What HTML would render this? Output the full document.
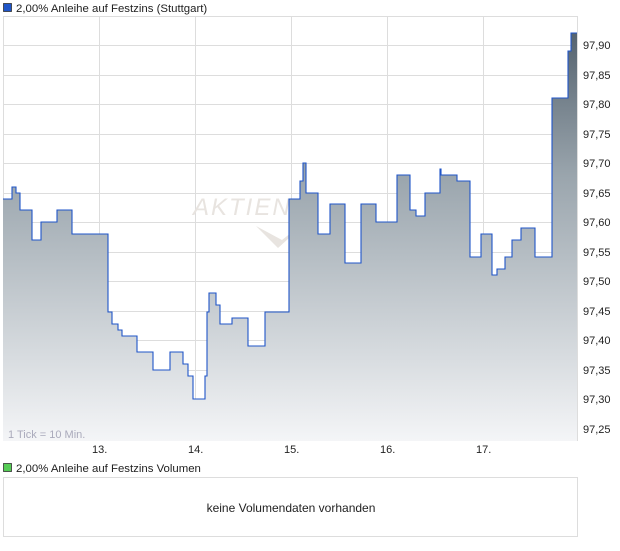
<!DOCTYPE html>
<html><head><meta charset="utf-8"><style>
body{margin:0;background:#fff;width:620px;height:546px;overflow:hidden;font-family:"Liberation Sans",sans-serif;}
</style></head><body>
<svg width="620" height="546" xmlns="http://www.w3.org/2000/svg" font-family="Liberation Sans, sans-serif" font-size="11">
<defs><linearGradient id="g" x1="0" y1="0" x2="0" y2="1">
<stop offset="0" stop-color="#55636f"/><stop offset="0.35" stop-color="#9aa5ad"/><stop offset="1" stop-color="#f4f5f7"/></linearGradient></defs>
<rect x="3.5" y="16.5" width="574" height="424" fill="#fff" stroke="#ddd"/>
<g stroke="#ddd" stroke-width="1">
<line x1="99.5" y1="16" x2="99.5" y2="441"/><line x1="195.5" y1="16" x2="195.5" y2="441"/><line x1="291.5" y1="16" x2="291.5" y2="441"/><line x1="387.5" y1="16" x2="387.5" y2="441"/><line x1="483.5" y1="16" x2="483.5" y2="441"/>
<line x1="3" y1="45.5" x2="578" y2="45.5"/><line x1="3" y1="75.5" x2="578" y2="75.5"/><line x1="3" y1="104.5" x2="578" y2="104.5"/><line x1="3" y1="134.5" x2="578" y2="134.5"/><line x1="3" y1="163.5" x2="578" y2="163.5"/><line x1="3" y1="193.5" x2="578" y2="193.5"/><line x1="3" y1="222.5" x2="578" y2="222.5"/><line x1="3" y1="252.5" x2="578" y2="252.5"/><line x1="3" y1="281.5" x2="578" y2="281.5"/><line x1="3" y1="311.5" x2="578" y2="311.5"/><line x1="3" y1="340.5" x2="578" y2="340.5"/><line x1="3" y1="370.5" x2="578" y2="370.5"/><line x1="3" y1="399.5" x2="578" y2="399.5"/><line x1="3" y1="429.5" x2="578" y2="429.5"/>
</g>
<text x="193" y="215" font-size="24" font-style="italic" fill="#e8e4e0" letter-spacing="2">AKTIEN</text>
<path d="M256 226 L278 248 L320 210 L282 240 Z" fill="#e8e4e0"/>
<path d="M3 199 H12 V187 H16 V193 H20 V210 H32 V240 H41 V222 H57 V210 H72 V234 H108 V312 H112 V324 H118 V330 H122 V336 H137 V352 H153 V370 H170 V352 H183 V364 H188 V376 H193 V399 H205 V376 H207 V312 H209 V293 H216 V305 H220 V324 H232 V318 H248 V346 H265 V312 H289 V199 H300 V181 H303 V163 H306 V193 H318 V234 H330 V204 H345 V263 H361 V204 H376 V222 H397 V175 H410 V210 H416 V216 H425 V193 H440 V169 H441 V175 H457 V181 H470 V257 H481 V234 H492 V275 H497 V269 H505 V257 H512 V240 H521 V228 H535 V257 H552 V98 H568 V51 H571 V33 H577 V441 H3 Z" fill="url(#g)"/>
<path d="M3 199 H12 V187 H16 V193 H20 V210 H32 V240 H41 V222 H57 V210 H72 V234 H108 V312 H112 V324 H118 V330 H122 V336 H137 V352 H153 V370 H170 V352 H183 V364 H188 V376 H193 V399 H205 V376 H207 V312 H209 V293 H216 V305 H220 V324 H232 V318 H248 V346 H265 V312 H289 V199 H300 V181 H303 V163 H306 V193 H318 V234 H330 V204 H345 V263 H361 V204 H376 V222 H397 V175 H410 V210 H416 V216 H425 V193 H440 V169 H441 V175 H457 V181 H470 V257 H481 V234 H492 V275 H497 V269 H505 V257 H512 V240 H521 V228 H535 V257 H552 V98 H568 V51 H571 V33 H577" fill="none" stroke="#1f55c8" stroke-width="1.1"/>
<g fill="#222">
<text x="583" y="49">97,90</text><text x="583" y="79">97,85</text><text x="583" y="108">97,80</text><text x="583" y="138">97,75</text><text x="583" y="167">97,70</text><text x="583" y="197">97,65</text><text x="583" y="226">97,60</text><text x="583" y="256">97,55</text><text x="583" y="285">97,50</text><text x="583" y="315">97,45</text><text x="583" y="344">97,40</text><text x="583" y="374">97,35</text><text x="583" y="403">97,30</text><text x="583" y="433">97,25</text>
<text x="92" y="453">13.</text><text x="188" y="453">14.</text><text x="284" y="453">15.</text><text x="380" y="453">16.</text><text x="476" y="453">17.</text>
</g>
<text x="8" y="438" fill="#aab">1 Tick = 10 Min.</text>
<rect x="3.5" y="3.5" width="8" height="8" fill="#1f55c8" stroke="#333" stroke-width="0.8"/>
<text x="16" y="12" fill="#222" font-size="11.4">2,00% Anleihe  auf Festzins (Stuttgart)</text>
<rect x="3.5" y="463.5" width="8" height="8" fill="#5c5" stroke="#333" stroke-width="0.8"/>
<text x="16" y="472" fill="#222" font-size="11.4">2,00% Anleihe  auf Festzins Volumen</text>
<rect x="3.5" y="477.5" width="574" height="59" fill="#fff" stroke="#ddd"/>
<text x="291" y="512" fill="#222" font-size="12" text-anchor="middle">keine Volumendaten vorhanden</text>
</svg>
</body></html>
